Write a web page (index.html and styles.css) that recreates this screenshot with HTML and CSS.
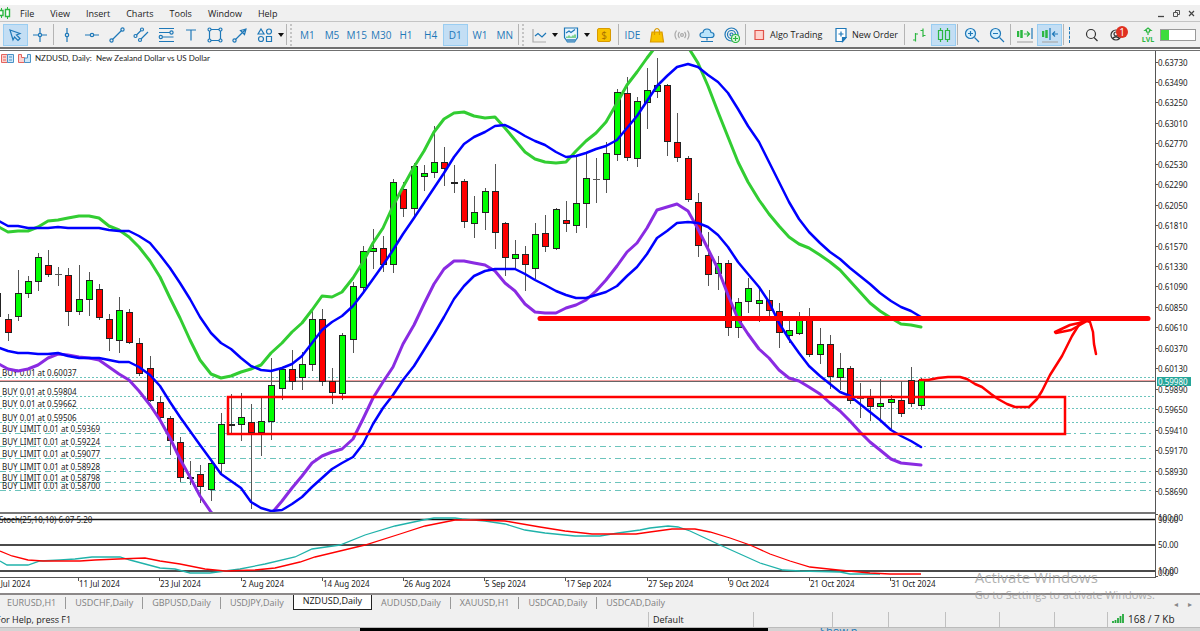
FILE: index.html
```
<!DOCTYPE html>
<html lang="en">
<head>
  <meta charset="UTF-8" />
  <meta name="viewport" content="width=device-width, initial-scale=1.0"/>
  <title>NZDUSD, Daily</title>
  <link rel="stylesheet" href="styles.css">
</head>
<body>
  <header>
    <nav class="menu-bar">
      <svg class="app-logo" width="11" height="12" viewBox="0 0 11 12"><path d="M1.500 1v10M7.500 0v12" stroke="#2db742"/><path d="M-1 3.500h4v5h-4zM5.500 2.500h4v7h-4z" fill="#fff" stroke="#2db742" stroke-width="1.400"/></svg>
      <a href="#">File</a>
      <a href="#">View</a>
      <a href="#">Insert</a>
      <a href="#">Charts</a>
      <a href="#">Tools</a>
      <a href="#">Window</a>
      <a href="#">Help</a>
      <div class="window-buttons">
        <button aria-label="Minimize"><svg width="9" height="9" viewBox="0 0 9 9"><path d="M1 7.500h6" stroke="#444" stroke-width="1.300"/></svg></button>
        <button aria-label="Restore"><svg width="9" height="9" viewBox="0 0 9 9"><path d="M1.500 3.500h4v4h-4zM3.500 3V1.500h4v4H6" fill="none" stroke="#555"/></svg></button>
        <button aria-label="Close"><svg width="9" height="9" viewBox="0 0 9 9"><path d="M2 2l5 5M7 2L2 7" stroke="#444" stroke-width="1.200"/></svg></button>
      </div>
    </nav>

    <div class="toolbar">
      <div class="group cursors">
        <button class="active" aria-label="Cursor"><svg viewBox="0 0 16 16"><path d="M3 3l10 3.500-3.500 1.500 3.500 3.500-2 2-3.500-3.500L6 13z"/></svg></button>
        <button aria-label="Crosshair"><svg viewBox="0 0 16 16"><path d="M8 1v5M8 10v5M1 8h5M10 8h5"/><circle cx="8" cy="8" r="1.600"/></svg></button>
      </div>
      <span class="sep"></span>
      <div class="group nine">
        <button aria-label="Vertical line"><svg viewBox="0 0 16 16"><path d="M8 1v5M8 10v5"/><circle cx="8" cy="8" r="1.700"/></svg></button>
        <button aria-label="Horizontal line"><svg viewBox="0 0 16 16"><path d="M1 8h5M10 8h5"/><circle cx="8" cy="8" r="1.700"/></svg></button>
        <button aria-label="Trend line"><svg viewBox="0 0 16 16"><path d="M3.500 12.500l9-9"/><circle cx="2.500" cy="13.500" r="1.600"/><circle cx="13.500" cy="2.500" r="1.600"/></svg></button>
        <button aria-label="Channel"><svg viewBox="0 0 16 16"><path d="M3.500 8L8 3.500M8 12l7-7"/><circle cx="2.500" cy="9" r="1.500"/><circle cx="9" cy="2.500" r="1.500"/><circle cx="7" cy="13" r="1.500"/></svg></button>
        <button aria-label="Fibonacci"><svg viewBox="0 0 16 16"><path d="M1 1.500h15M1 5.500h11M4.500 10h11M1 14.500h15"/><circle cx="13.500" cy="5.500" r="1.600"/><circle cx="2.800" cy="10" r="1.600"/></svg></button>
        <button aria-label="Text"><svg viewBox="0 0 16 16"><path d="M3 3h10M8 3v10.500"/></svg></button>
        <button aria-label="Rectangle"><svg viewBox="0 0 16 16"><path d="M4 2.500h8M4 13.500h8M2.500 4v8M13.500 4v8"/><circle cx="2.500" cy="2.500" r="1.500"/><circle cx="13.500" cy="2.500" r="1.500"/><circle cx="2.500" cy="13.500" r="1.500"/><circle cx="13.500" cy="13.500" r="1.500"/></svg></button>
        <button aria-label="Arrow"><svg viewBox="0 0 16 16"><path d="M3.500 12.500L14 2M8.500 3.500L14 2l-1.500 5.500z"/><circle cx="2.500" cy="13.500" r="1.600"/></svg></button>
        <button aria-label="Shapes"><svg viewBox="0 0 16 16"><path d="M4 2l3 5H1zM9.500 9.500h5v5h-5z"/><circle cx="12" cy="4.500" r="2.500"/><circle cx="4" cy="12" r="2.500"/></svg></button>
      </div>
      <button class="caret" aria-label="More shapes"></button>
      <span class="sep"></span>
      <span class="grip"></span>
      <div class="group nine periods">
        <button>M1</button>
        <button>M5</button>
        <button>M15</button>
        <button>M30</button>
        <button>H1</button>
        <button>H4</button>
        <button class="active">D1</button>
        <button>W1</button>
        <button>MN</button>
      </div>
      <span class="sep"></span>
      <span class="grip"></span>
      <button class="tool" aria-label="Chart type"><svg viewBox="0 0 16 16"><path d="M2 2v13h13" stroke="#aaa"/><path d="M4 9l3-2.500 4 3.500 4-4"/></svg></button>
      <button class="caret" aria-label="Chart types"></button>
      <button class="tool" aria-label="Indicators"><svg viewBox="0 0 16 16"><path d="M1.500 1h13v9.500l-3 4.500h-7l-3-4.500z" fill="#eaf6fe"/><path d="M2 12h12l-3 3H5z" fill="#5b9bca" stroke="none"/><path d="M3 6l3-2 2 1.500 4-3"/><path d="M4 11V9.500M6 11V8.500M8 11V9.500M10 11V8.500M12 11V7.500" stroke="#35b848"/></svg></button>
      <button class="caret" aria-label="Indicator list"></button>
      <button class="tool money" aria-label="Quotes"><span>$</span></button>
      <span class="sep"></span>
      <div class="group five">
        <button>IDE</button>
        <button aria-label="Market"><svg viewBox="0 0 16 16"><path d="M3 5h10l1.500 10h-13z" fill="#f8c300" stroke="#d99a00"/><path d="M5.500 8V3.500q2.500-4 5 0V8" stroke="#d99a00"/></svg></button>
        <button aria-label="Signals"><svg viewBox="0 0 16 16"><g stroke="#a9a9a9"><circle cx="8" cy="8" r="1.400"/><path d="M5.500 5q-2.500 3 0 6M10.500 5q2.500 3 0 6M2.500 3.500q-3 4.500 0 9M13.500 3.500q3 4.500 0 9"/></g></svg></button>
        <button aria-label="Cloud"><svg viewBox="0 0 16 16"><path d="M4 10.500Q1 10.500 1 8t3-2.500Q4.500 2 8 2t4 3.500Q15 5.500 15 8t-3 2.500z" fill="#b9e4fb"/><path d="M8 10.500v3M2 14.500h12"/></svg></button>
        <button aria-label="VPS"><svg viewBox="0 0 16 16"><circle cx="7.500" cy="7.500" r="6.500"/><circle cx="7.500" cy="7.500" r="4"/><circle cx="7.500" cy="7.500" r="1.500"/><circle cx="11.500" cy="11.500" r="4" fill="#dff8e2" stroke="#2db742"/><path d="M9 11.500h5M11.500 9v5" stroke="#2db742"/></svg></button>
      </div>
      <span class="sep"></span>
      <div class="orders">
        <button><svg viewBox="0 0 12 16"><path d="M2 3.500h8.500v9H2z" fill="#ffd2cc" stroke="#e0524a"/></svg>Algo Trading</button>
        <button><svg viewBox="0 0 12 16"><path d="M1 1.500h10v9L7.500 14.500H1z" fill="#fff"/><path d="M11 10.500H7.500v4z" fill="#1e78b8"/><path d="M3.500 7h5M6 4.500v5"/></svg>New Order</button>
      </div>
      <span class="sep"></span>
      <div class="group two green">
        <button aria-label="Bars"><svg viewBox="0 0 16 16"><path d="M4.500 6v8.500M2 13h2.500M4.500 7H7M12 1.500V10M9.500 3.500H12M12 8.500h2.500"/></svg></button>
        <button class="active" aria-label="Candles"><svg viewBox="0 0 16 16"><path d="M4.500 1v2M4.500 13v2M11.500 1v2M11.500 13v2M2.500 3.500h4v9h-4zM9.500 3.500h4v9h-4z"/></svg></button>
      </div>
      <span class="sep"></span>
      <div class="group two">
        <button aria-label="Zoom in"><svg viewBox="0 0 16 16"><circle cx="6.500" cy="6.500" r="5" fill="#d6effc"/><path d="M10.500 10.500L15 15M4 6.500h5M6.500 4v5"/></svg></button>
        <button aria-label="Zoom out"><svg viewBox="0 0 16 16"><circle cx="6.500" cy="6.500" r="5" fill="#d6effc"/><path d="M10.500 10.500L15 15M4 6.500h5"/></svg></button>
      </div>
      <span class="sep"></span>
      <div class="group two">
        <button aria-label="Auto scroll"><svg viewBox="0 0 16 16"><path d="M1 4v6M4.500 3v8" stroke="#2db742" stroke-width="2.500"/><path d="M7 7h5M10 4.500L12.500 7 10 9.500" stroke="#2db742"/><path d="M15 1v11"/><path d="M0 15h16" stroke="#aaa"/></svg></button>
        <button class="active" aria-label="Chart shift"><svg viewBox="0 0 16 16"><path d="M1 4v6M4.500 3v8" stroke="#2db742" stroke-width="2.500"/><path d="M8 1v12M10.500 7H16M13 4.500L10.500 7 13 9.500"/><path d="M0 15h16" stroke="#aaa"/></svg></button>
      </div>
      <span class="sep"></span>
      <span class="grip blue"></span>
      <div class="account">
        <button class="tool" aria-label="Search"><svg viewBox="0 0 16 16"><circle cx="7" cy="7" r="4.500" stroke="#333"/><path d="M10 10.500L13.500 14" stroke="#333"/></svg></button>
        <button class="tool profile" aria-label="Profile"><svg viewBox="0 0 16 16"><g stroke="#333"><circle cx="8" cy="8" r="5"/><circle cx="8" cy="7" r="2"/><path d="M4.500 11.500q3.500-3.500 7 0"/></g></svg><span class="badge">1</span></button>
        <button class="tool level" aria-label="Level"><svg viewBox="0 0 16 9"><path d="M8 8V5M8 1l3 2.500H9.500V5h-3V3.500H5z" stroke="#2db742"/></svg><span>LVL</span></button>
        <span class="battery"></span>
      </div>
    </div>
  </header>

  <main>
    <svg class="chart" id="chart" viewBox="0 51 1200 542" role="img" aria-label="NZDUSD daily chart">
      <defs>
        <clipPath id="plot"><path d="M0 50h1155v462H0z"/></clipPath>
      </defs>
      <g class="title-icons">
        <path d="M1.500 54.500h6v8h-6z" fill="#fbd3d0" stroke="#e4645e"/><path d="M7.500 54.500h6v8h-6z" fill="#cfe6f7" stroke="#4a92c6"/>
        <path d="M3 57h3M3 60h3" stroke="#e4645e"/><path d="M9 57h3M9 60h3" stroke="#4a92c6"/>
        <path d="M18.500 54.500h3v3h3v5h-6z" fill="#fbd3d0" stroke="#e4645e"/><path d="M24.500 58v4.500h6v-8h-3v3.500z" fill="#cfe6f7" stroke="#4a92c6"/>
      </g>
      <text class="chart-title" x="35" y="61">NZDUSD, Daily:&#160; New Zealand Dollar vs US Dollar</text>
      <g id="orders"></g>
      <path class="bid" d="M0 381.500h1155"/>
      <path class="ask" d="M0 380.500h1155"/>
      <g id="candles"></g>
      <g id="bands" clip-path="url(#plot)"></g>
      <g class="drawing">
        <path class="zone" d="M228 397h837v37H228z"/>
        <path class="level-line" d="M540 318.500h608"/>
        <path class="sketch" d="M920 380l8 0 10-2 10-1h12l7 2 8 5 7 3 9 7 7 5 9 5 8 3h14l8-8 5-8 8-16 12-19 10-20 8-13 8-3"/>
        <path class="sketch" d="M1088 321l-18 4-15 7 1 1 15-3 16-9 3 1 3 10 1 12 2 10"/>
      </g>
      <path class="splitter" d="M0 513h1155"/>
      <path class="stoch-level" d="M0 519.500h1155M0 545h1155M0 571h1155"/>
      <g id="stoch"></g>
      <text x="-1" y="523">Stoch(25,10,10) 6.07 5.20</text>
      <path class="axis-line" d="M0 577.500h1155.500M1155.500 51v527"/>
      <path class="axis-line" d="M1155 514.500h3M1155 576.500h3"/>
      <g id="prices"></g>
      <g id="dates"></g>
    </svg>
    <div class="watermark"><strong>Activate Windows</strong><span>Go to Settings to activate Windows.</span></div>
  </main>

  <footer>
    <nav class="tabs">
      <a href="#">EURUSD,H1</a>
      <a href="#">USDCHF,Daily</a>
      <a href="#">GBPUSD,Daily</a>
      <a href="#">USDJPY,Daily</a>
      <a href="#" class="current">NZDUSD,Daily</a>
      <a href="#">AUDUSD,Daily</a>
      <a href="#">XAUUSD,H1</a>
      <a href="#">USDCAD,Daily</a>
      <a href="#">USDCAD,Daily</a>
      <div class="tab-scroll"><button aria-label="Scroll left">◂</button><button aria-label="Scroll right">▸</button></div>
    </nav>
    <div class="status-bar">
      <span class="help">For Help, press F1</span>
      <span>Default</span>
      <span></span>
      <span></span>
      <span></span>
      <span></span>
      <span></span>
      <span></span>
      <span class="traffic"><svg width="12" height="9" viewBox="0 0 12 9"><path d="M1 9V7M3.500 9V6M6 9V4M8.500 9V2M11 9V0" stroke="#22a83a" stroke-width="1.800"/></svg>168 / 7 Kb</span>
    </div>
    <div class="desktop"><span class="taskbar"></span><a href="#">Show n</a></div>
  </footer>
  <script src="script.js"></script>
</body>
</html>
```
FILE: styles.css
```
body {
  margin: 0;
  background: #fff;
  color: #222;
  font-family: "Open Sans", "Noto Sans", sans-serif;
  font-size: 9px;
  overflow-x: hidden;
}

button {
  margin: 0;
  padding: 0;
  border: 0;
  background: none;
  color: #1e78b8;
  font: inherit;
}

a {
  color: inherit;
  text-decoration: none;
}

header {
  border-top: 5px solid #fff;
  border-bottom: 1px solid #707070;
  background: #f0f0f0;
}

.menu-bar {
  display: flex;
  align-items: center;
  gap: 16px;
  height: 16px;
  padding-right: 4px;
  border-bottom: 1px solid #c4c4c4;
}

.app-logo {
  margin-right: -7px;
}

.window-buttons {
  display: flex;
  gap: 6px;
  margin-left: auto;
}

.window-buttons svg {
  display: block;
}

.toolbar {
  display: flex;
  align-items: center;
  height: 25px;
  padding-left: 3px;
  border-bottom: 1px solid #707070;
}

.toolbar button {
  display: flex;
  align-items: center;
  justify-content: center;
  height: 22px;
  box-sizing: border-box;
  font-size: 10px;
}

.toolbar svg {
  width: 16px;
  height: 16px;
  fill: none;
  stroke: #1e78b8;
  stroke-width: 1.2;
}

.toolbar .active {
  border: 1px solid #99cdf2;
  background: #c3def4;
}

.group {
  display: grid;
}

.cursors {
  width: 49px;
  grid-template-columns: repeat(2, 1fr);
}

.two {
  width: 50px;
  grid-template-columns: repeat(2, 1fr);
}

.five {
  width: 124px;
  grid-template-columns: repeat(5, 1fr);
}

.nine {
  width: 222px;
  grid-template-columns: repeat(9, 1fr);
}

.toolbar .green svg {
  stroke: #2db742;
}

.sep {
  width: 1px;
  height: 21px;
  margin: 0 1px;
  background: #b4b4b4;
}

.grip {
  height: 22px;
  margin: 0 3px 0 2px;
  border-left: 2px dotted #c4c4c4;
}

.grip.blue {
  height: 16px;
  margin-left: 4px;
  border-left: 1px dashed #1e78b8;
}

.caret {
  width: 8px;
}

.caret::before {
  content: "";
  border: 3px solid transparent;
  border-top: 4px solid #111;
  border-bottom: 0;
}

.tool {
  width: 24px;
}

.money {
  width: 26px;
}

.money span {
  width: 12px;
  border: 1px solid #d99a00;
  border-radius: 2px;
  background: #f8c300;
  color: #a87000;
  line-height: 12px;
}

.orders {
  display: flex;
  justify-content: space-between;
  width: 145px;
  padding: 0 5px 0 6px;
}

.toolbar .orders button {
  gap: 5px;
  color: #222;
  font-size: 9px;
}

.orders svg {
  width: 12px;
}

.account {
  display: flex;
  align-items: center;
  margin-left: auto;
  padding-right: 4px;
}

.profile {
  position: relative;
}

.badge {
  position: absolute;
  top: 2px;
  left: 12px;
  width: 12px;
  border-radius: 6px;
  background: #e03020;
  color: #fff;
  line-height: 12px;
}

.toolbar .level {
  flex-direction: column;
  margin-left: 8px;
  color: #2db742;
  font-size: 7px;
  font-weight: bold;
  line-height: 7px;
}

.toolbar .level svg {
  height: 9px;
}

.battery {
  width: 34px;
  height: 10px;
  border: 1px solid #999;
  background: linear-gradient(to right, #3ddc3d 8px, #fff 8px);
}

main {
  position: relative;
  border-top: 1px solid #fff;
  border-bottom: 2px solid #8c8888;
}

main::before {
  content: "";
  display: block;
  height: 1px;
  background: #707070;
}

.chart {
  display: block;
  width: 100%;
  height: auto;
}

.chart text {
  font-family: "Noto Sans", sans-serif;
  font-size: 8px;
  fill: #222;
}

.chart .chart-title {
  font-family: Lato, sans-serif;
}

.title-icons {
  stroke-width: 1;
}

.ask {
  stroke: #f2a0a0;
}

.bid {
  stroke: #666;
}

.position {
  stroke: #6cc4bc;
  stroke-dasharray: 2 2;
}

.limit {
  stroke: #6cc4bc;
  stroke-dasharray: 6 3 2 4;
}

#candles {
  shape-rendering: crispEdges;
}

.wick {
  stroke: #555;
}

.up {
  fill: #0f0;
  stroke: #222;
}

.down {
  fill: #f00;
  stroke: #222;
}

.band {
  fill: none;
  stroke-linejoin: round;
  stroke-linecap: round;
}

.band-blue {
  stroke: #00f;
  stroke-width: 2.5;
}

.band-green {
  stroke: #32cd32;
  stroke-width: 3;
}

.band-purple {
  stroke: #8a2be2;
  stroke-width: 3;
}

.drawing path {
  fill: none;
  stroke: #f00;
}

.drawing .zone {
  stroke-width: 2.5;
}

.drawing .level-line {
  stroke-width: 5;
  stroke-linecap: round;
}

.drawing .sketch {
  stroke-width: 2.5;
  stroke-linecap: round;
  stroke-linejoin: round;
}

.splitter {
  stroke: #777;
  stroke-width: 2;
}

.stoch-level {
  stroke: #111;
  stroke-width: 1.5;
}

.stoch-main,
.stoch-signal {
  fill: none;
  stroke: #20b2aa;
  stroke-width: 1.3;
}

.stoch-signal {
  stroke: #f00;
}

.axis-line {
  stroke: #555;
}

.price-tag {
  fill: #26a69a;
}

.chart .price-now {
  fill: #fff;
}

.watermark {
  position: absolute;
  right: 45px;
  bottom: -11px;
  z-index: 1;
  color: #999;
  opacity: 0.75;
  pointer-events: none;
}

.watermark strong,
.watermark span {
  display: block;
  line-height: 18px;
}

.watermark strong {
  font-size: 15px;
  font-weight: normal;
}

.watermark span {
  font-size: 11px;
}

footer {
  background: #f0f0f0;
}

.tabs {
  display: flex;
  align-items: center;
  height: 16px;
  color: #808080;
}

.tabs > a {
  padding: 0 9px;
  border-right: 1px solid #999;
  line-height: 12px;
}

.tabs > a:first-child {
  padding-left: 7px;
}

.tabs > .current {
  align-self: stretch;
  margin: -2px 0 1px -1px;
  border: 1px solid #222;
  border-top: 0;
  background: #fff;
  color: #111;
  line-height: 16px;
}

.tabs > a:nth-last-child(2) {
  border-right: 0;
}

.tab-scroll {
  display: flex;
  gap: 10px;
  margin-left: auto;
  padding-right: 8px;
}

.tab-scroll button {
  color: #888;
  font-size: 8px;
}

.status-bar {
  display: grid;
  grid-template-columns: 648fr 105fr 79fr 56fr 57fr 54fr 55fr 53fr 93fr;
  align-items: center;
  height: 16px;
  border-bottom: 1px solid #bbb;
}

.status-bar span {
  height: 15px;
  padding-left: 4px;
  border-left: 1px solid #c0c0c0;
  line-height: 15px;
  white-space: nowrap;
}

.status-bar .help {
  border-left: 0;
  padding-left: 0;
  text-indent: -4px;
}

.status-bar .traffic {
  font-size: 10px;
}

.traffic svg {
  margin-right: 4px;
}

.desktop {
  display: flex;
  height: 3px;
  overflow: hidden;
  background: #d4d4d4;
  color: #1e78b8;
  font-size: 11px;
  line-height: 5px;
}

.taskbar {
  width: 34%;
  margin: 0 4% 0 30%;
  background: #000;
}

.desktop a {
  padding-left: 4px;
}
```
FILE: script.js
```
const chart = {
  left: 7.5,
  step: 10.15,
  top: 62.5,
  rowHeight: 20.45
};

// high, body top, body bottom, low, direction (1 up, 0 down)
const candles = [
  [293,293,317,317,0],
  [314,319,333,340,0],[270,293,317,320,1],[276,281,294,297,1],[253,257,282,290,1],
  [250,265,275,276,0],[267,274,274,285,0],[268,275,312,325,0],[265,299,312,314,1],
  [272,280,300,315,1],[284,289,318,319,0],[314,319,339,350,0],[297,310,341,352,1],
  [309,312,343,343,0],[338,343,374,375,0],[356,368,401,401,0],[396,402,418,418,0],
  [416,418,441,454,0],[437,442,478,481,0],[461,477,479,484,1],[465,474,487,502,0],
  [461,463,490,500,1],[413,424,464,472,1],[394,424,425,433,0],[393,417,425,440,1],
  [404,422,433,508,0],[398,421,433,455,1],[358,385,422,439,1],[368,369,389,399,1],
  [350,369,382,389,0],[352,364,378,389,1],[311,319,365,370,1],[309,319,382,385,0],
  [368,381,393,403,0],[333,335,394,399,1],[282,286,340,352,1],[246,251,288,290,1],
  [229,248,252,268,1],[236,248,265,271,0],[179,182,265,272,1],[182,189,209,216,0],
  [163,166,209,216,1],[165,173,177,190,1],[126,162,173,177,1],[147,162,169,185,0],
  [165,182,183,192,1],[179,181,222,227,0],[196,212,224,237,1],[188,191,213,229,1],
  [164,191,233,248,0],[222,223,258,275,0],[240,254,259,269,1],[246,254,265,290,0],
  [223,234,269,278,1],[215,233,247,251,0],[208,209,249,249,1],[201,220,224,231,0],
  [155,203,226,232,1],[154,178,204,227,1],[158,179,179,202,0],[142,153,180,192,1],
  [89,92,155,160,1],[77,93,158,160,0],[97,101,159,166,1],[68,90,103,128,1],
  [58,85,92,97,1],[84,85,142,155,0],[113,142,158,161,0],[156,158,200,201,0],
  [193,202,246,256,0],[232,255,275,285,0],[256,263,274,289,1],[260,263,328,335,0],
  [298,302,328,337,1],[278,288,302,312,1],[289,300,304,321,1],[290,300,311,317,0],
  [303,311,333,347,0],[317,330,336,342,1],[312,320,334,334,1],[308,320,355,356,0],
  [328,344,355,363,1],[335,344,377,388,0],[353,368,378,389,1],[366,368,401,403,0],
  [383,398,398,417,0],[389,398,407,420,0],[379,403,407,419,1],[395,399,403,428,1],
  [381,400,414,416,0],[367,380,404,406,0],[378,380,406,409,1]
];

// one value per candle
const bands = {
  green: [
    226,232,231,231,227,221,220,218,216,216,218,226,230,237,247,261,277,298,318,340,360,374,
    378,376,372,369,365,353,343,332,323,310,296,297,292,278,262,243,228,206,187,167,151,132,
    119,113,112,116,118,117,128,140,152,159,162,163,162,151,141,133,122,103,85,72,58,45,
    35,36,47,63,86,112,137,162,182,200,214,226,237,244,248,255,262,270,281,292,303,311,
    318,324,325,327
  ],
  purple: [
    363,369,371,369,365,358,354,355,357,358,360,367,374,380,391,405,420,438,459,477,496,512,
    525,530,530,525,522,514,501,488,476,463,456,452,449,439,419,398,382,367,344,325,304,284,
    269,261,261,263,265,271,283,291,304,312,313,313,308,305,300,291,280,266,252,243,228,210,
    207,204,211,229,249,269,295,319,334,349,358,370,378,381,387,394,403,411,421,432,442,450,
    459,463,464,465
  ],
  blueUpper: [
    220,226,226,228,228,228,227,228,228,228,228,230,231,231,236,243,255,268,283,299,317,333,
    343,349,358,366,370,371,368,364,356,343,330,322,316,306,293,279,265,250,234,218,203,188,
    173,157,144,137,132,126,125,130,136,141,145,152,157,156,153,149,146,140,128,116,101,86,
    76,67,64,67,75,82,93,109,126,142,162,182,202,219,232,243,252,259,268,276,284,293,
    301,307,311,317
  ],
  blueLower: [
    347,351,353,353,354,354,353,356,358,358,358,360,362,362,367,375,386,402,417,431,445,460,
    474,481,488,502,508,511,510,504,497,487,478,469,463,457,444,424,408,395,380,366,350,334,
    317,299,286,276,271,269,269,269,274,280,285,291,295,298,298,295,292,286,276,267,254,238,
    231,223,222,223,227,235,247,262,274,287,302,323,339,353,366,376,384,392,396,404,412,420,
    430,436,441,447
  ]
};

const stochMain = "0,561 7,565 28,565 40,561 60,560 75,559 92,557 120,557 130,560 160,568 175,569 190,573 210,573 225,571 240,569 265,564 295,557 312,549 340,545 365,535 395,526 423,520 434,518 455,518 462,519 485,521 505,524 525,530 545,533 575,536 600,536 618,533 640,530 650,528 668,526 678,527 690,531 705,538 720,545 740,554 760,563 783,570 800,571 840,572 850,574 880,574";
const stochSignal = "0,551 12,556 28,560 43,561 80,561 95,560 118,559 145,558 160,561 180,564 205,569 225,571 255,570 275,568 300,562 315,557 340,551 365,545 400,534 425,526 455,520 475,520 505,521 540,527 565,531 592,534 636,534 650,532 672,529 695,529 710,532 730,538 750,545 770,554 790,561 810,567 838,570 870,573 890,574 921,574";

// label, label baseline, line position
const orders = [
  ["BUY 0.01 at 0.60037", 376, 377],
  ["BUY 0.01 at 0.59804", 395, 396],
  ["BUY 0.01 at 0.59662", 407, 408],
  ["BUY 0.01 at 0.59506", 421, 422],
  ["BUY LIMIT 0.01 at 0.59369", 432, 433],
  ["BUY LIMIT 0.01 at 0.59224", 445, 446],
  ["BUY LIMIT 0.01 at 0.59077", 457, 458],
  ["BUY LIMIT 0.01 at 0.58928", 470, 471],
  ["BUY LIMIT 0.01 at 0.58798", 481, 482],
  ["BUY LIMIT 0.01 at 0.58700", 489, 490]
];

const dates = ["1 Jul 2024", "11 Jul 2024", "23 Jul 2024", "2 Aug 2024", "14 Aug 2024", "26 Aug 2024",
  "5 Sep 2024", "17 Sep 2024", "27 Sep 2024", "9 Oct 2024", "21 Oct 2024", "31 Oct 2024"];

function add(parent, tag, attrs, text) {
  const el = document.createElementNS("http://www.w3.org/2000/svg", tag);
  for (const key in attrs) el.setAttribute(key, attrs[key]);
  if (text) el.textContent = text;
  document.getElementById(parent).appendChild(el);
}

// the first candle is half out of view
function candleX(i) {
  return Math.round(chart.left + (i - 1) * chart.step);
}

candles.forEach(([high, top, bottom, low, up], i) => {
  const x = candleX(i);
  add("candles", "path", { class: "wick", d: `M${x + 0.5} ${high}V${low + 1}` });
  if (top === bottom) {
    add("candles", "path", { class: "wick", d: `M${x - 3} ${top + 0.5}h7` });
  } else {
    add("candles", "rect", { class: up ? "up" : "down", x: x - 2.5, y: top + 0.5, width: 6, height: bottom - top - 1 || 1 });
  }
});

function drawBand(values, name) {
  const points = values.map((y, i) => `${candleX(i)},${y}`).join(" ");
  add("bands", "polyline", { class: "band band-" + name, points });
}

drawBand(bands.green, "green");
drawBand(bands.purple, "purple");
drawBand(bands.blueUpper, "blue");
drawBand(bands.blueLower, "blue");

add("stoch", "polyline", { class: "stoch-main", points: stochMain });
add("stoch", "polyline", { class: "stoch-signal", points: stochSignal });

orders.forEach(([label, baseline, y]) => {
  add("orders", "path", { class: label.includes("LIMIT") ? "limit" : "position", d: `M0 ${y + 0.5}h1155` });
  add("orders", "text", { x: 2, y: baseline }, label);
});

for (let i = 0; i < 22; i++) {
  const y = Math.round(chart.top + i * chart.rowHeight);
  add("prices", "path", { class: "axis-line", d: `M1155 ${y - 0.5}h3` });
  add("prices", "text", { x: 1158, y: y + 3 }, (0.6373 - i * 0.0024).toFixed(5));
}
add("prices", "rect", { class: "price-tag", x: 1157, y: 377, width: 34, height: 9 });
add("prices", "text", { class: "price-now", x: 1158, y: 385 }, "0.59980");

[["100.00", 521], ["90.00", 523], ["50.00", 548], ["10.00", 574], ["0.00", 576]].forEach(([label, y]) => {
  add("prices", "text", { x: 1158, y }, label);
});

dates.forEach((label, i) => {
  const x = Math.round(-3 + i * 8 * chart.step);
  if (i > 0) add("dates", "path", { class: "axis-line", d: `M${x + 0.5} 578v3` });
  add("dates", "text", { x: i > 0 ? x + 1 : x - 3, y: 587 }, label);
});
```
